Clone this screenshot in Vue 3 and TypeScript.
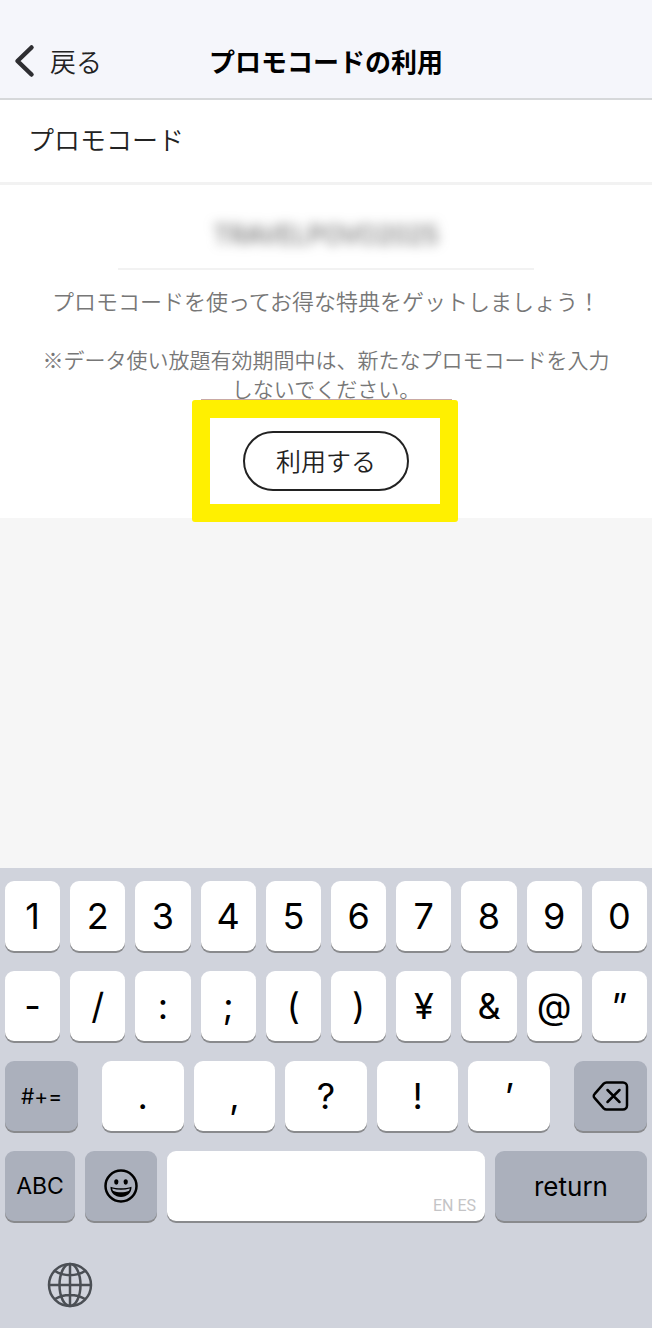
<script setup lang="ts">
import { ref } from 'vue'

const code = ref<string>('TRAVELPOVO2025')
const topRows: string[][] = [
  ['1', '2', '3', '4', '5', '6', '7', '8', '9', '0'],
  ['-', '/', ':', ';', '(', ')', '¥', '&', '@', '”'],
]
const punctuation: string[] = ['.', ',', '?', '!', '’']

function press(key: string): void {
  code.value += key
}

function erase(): void {
  code.value = code.value.slice(0, -1)
}
</script>

<template>
  <div class="screen">
    <header class="bar">
      <button class="back" type="button">
        <svg class="chevron" viewBox="0 0 22 34" aria-hidden="true">
          <path d="M17.500 3.500 3.500 17l14 13.500" />
        </svg>
        <span>戻る</span>
      </button>
      <h1 class="title">プロモコードの利用</h1>
    </header>

    <main>
      <div class="heading">
        <label for="promo">プロモコード</label>
      </div>
      <form class="form" @submit.prevent>
        <div class="field">
          <input id="promo" v-model="code" class="code" type="text" autocomplete="off" spellcheck="false" />
        </div>
        <p class="help">プロモコードを使ってお得な特典をゲットしましょう！</p>
        <p class="note">※データ使い放題有効期間中は、新たなプロモコードを入力しないでください。</p>
        <div class="action">
          <button class="submit" type="submit">利用する</button>
          <span class="highlight" aria-hidden="true"></span>
        </div>
      </form>
    </main>

    <section class="keyboard" aria-label="キーボード">
      <div v-for="(row, i) in topRows" :key="i" class="row tens">
        <button v-for="key in row" :key="key" class="key" type="button" @click="press(key)">{{ key }}</button>
      </div>
      <div class="row third">
        <button class="key dark side symbols" type="button">#+=</button>
        <div class="middle">
          <button v-for="key in punctuation" :key="key" class="key" type="button" @click="press(key)">{{ key }}</button>
        </div>
        <button class="key dark side" type="button" aria-label="削除" @click="erase">
          <svg class="delete" viewBox="0 0 38 32" aria-hidden="true">
            <path d="M14.500 2.500H31a4 4 0 0 1 4 4v19a4 4 0 0 1-4 4H14.500a4 4 0 0 1-2.800-1.200L2.700 18.200a3 3 0 0 1 0-4.400l9-10.100a4 4 0 0 1 2.800-1.200Z" />
            <path d="m15.500 10 12 12m0-12-12 12" />
          </svg>
        </button>
      </div>
      <div class="row fourth">
        <button class="key dark letters" type="button">ABC</button>
        <button class="key dark emoji" type="button" aria-label="絵文字">
          <svg class="face" viewBox="0 0 34 34" aria-hidden="true">
            <circle cx="17" cy="17" r="15.500" fill="none" stroke="#000" stroke-width="2.500" />
            <ellipse cx="12.300" cy="13" rx="2.100" ry="2.700" />
            <ellipse cx="21.700" cy="13" rx="2.100" ry="2.700" />
            <path d="M6.500 17.800c3.200 1 6.800 1.500 10.500 1.500s7.300-.5 10.500-1.500c.2 6.200-4.500 10.200-10.500 10.200S6.300 24 6.500 17.800Z" />
            <path d="M8.200 19.500c2.800.8 5.800 1.200 8.800 1.200s6-.4 8.800-1.200c-.1.900-.4 1.600-.8 2.200-2.500 1-5.200 1.500-8 1.500s-5.500-.5-8-1.500c-.4-.6-.7-1.300-.8-2.200Z" fill="#abb0bc" />
          </svg>
        </button>
        <button class="key space" type="button" @click="press(' ')">EN ES</button>
        <button class="key dark return" type="button">return</button>
      </div>
      <button class="globe" type="button" aria-label="次のキーボード">
        <svg viewBox="0 0 46 46" aria-hidden="true">
          <circle cx="23" cy="23" r="21" />
          <ellipse cx="23" cy="23" rx="10.500" ry="21" />
          <path d="M23 2v42M2 23h42M8 9c8.500 5.500 21.500 5.500 30 0M8 37c8.500-5.500 21.500-5.500 30 0" />
        </svg>
      </button>
    </section>
  </div>
</template>

<style>
body {
  margin: 0;
  background: #f6f6f6;
}
</style>

<style scoped>
.screen {
  display: flex;
  flex-direction: column;
  min-height: 100vh;
  background: #f6f6f6;
  color: #222;
  font-family: "Noto Sans CJK JP", sans-serif;
  font-weight: 350;
}

button,
input {
  margin: 0;
  padding: 0;
  border: 0;
  background: none;
  color: inherit;
  font: inherit;
}

.bar {
  display: grid;
  grid-template-columns: 1fr auto 1fr;
  align-items: center;
  height: 74px;
  padding: 24px 14px 0;
  border-bottom: 2px solid #d6d8da;
  background: #f5f6fb;
}

.back {
  display: flex;
  align-items: center;
  gap: 14px;
  justify-self: start;
  font-size: 26px;
  line-height: 38px;
}

.chevron {
  width: 22px;
  height: 34px;
  fill: none;
  stroke: #2e2e32;
  stroke-width: 4.5px;
  stroke-linecap: round;
  stroke-linejoin: round;
}

.title {
  margin: 0;
  color: #000;
  font-size: 26px;
  font-weight: 700;
  line-height: 38px;
}

.heading {
  padding: 20px 28px 24px;
  border-bottom: 3px solid #f2f2f2;
  background: #fff;
  font-size: 26px;
  line-height: 38px;
}

.form {
  display: flex;
  flex-direction: column;
  align-items: center;
  padding: 17px 36px 27px;
  background: #fff;
  color: #777;
  text-align: center;
}

.field {
  width: 416px;
  max-width: 100%;
  border-bottom: 2px solid #f2f2f2;
}

.code {
  display: block;
  box-sizing: border-box;
  width: 100%;
  height: 66px;
  outline: none;
  color: #555;
  font-family: Inter, sans-serif;
  font-size: 25px;
  font-weight: 400;
  text-align: center;
  filter: blur(6px);
}

.help,
.note {
  margin: 0;
  line-height: 29px;
}

.help {
  margin: 16px 0 30px;
  font-size: 22px;
  white-space: nowrap;
}

.note {
  font-size: 21px;
}

.action {
  position: relative;
  margin-top: 28px;
}

.submit {
  display: block;
  box-sizing: border-box;
  width: 166px;
  height: 60px;
  padding-bottom: 2px;
  border: 2px solid #222;
  border-radius: 30px;
  background: #fff;
  color: #222;
  font-size: 25px;
}

.highlight {
  position: absolute;
  inset: -31px -49px -31px -51px;
  border: 18px solid #fff000;
  border-radius: 3px;
  pointer-events: none;
}

.highlight::before {
  content: "";
  position: absolute;
  top: -19px;
  right: -12px;
  left: -9px;
  height: 1px;
  background: #c9a9a4;
}

.keyboard {
  display: flex;
  flex-direction: column;
  gap: 20px;
  box-sizing: border-box;
  min-height: 460px;
  margin-top: auto;
  padding: 13px 5px 20px;
  background: #d0d3dc;
  color: #000;
  font-family: Inter, sans-serif;
  font-weight: 400;
}

.row {
  display: flex;
  gap: 10px;
}

.tens {
  display: grid;
  grid-template-columns: repeat(10, 1fr);
}

.third {
  gap: 24px;
}

.middle {
  display: flex;
  flex: 1;
  gap: 10px;
}

.middle .key {
  flex: 1;
}

.key {
  display: flex;
  align-items: center;
  justify-content: center;
  min-width: 0;
  height: 70px;
  border-radius: 9px;
  background: #fff;
  box-shadow: 0 2px 0 #898a8d;
  font-size: 36px;
}

.dark {
  background: #abb0bc;
}

.side {
  width: 73px;
}

.symbols {
  font-size: 21px;
}

.letters {
  width: 70px;
  font-size: 23px;
}

.emoji {
  width: 72px;
}

.space {
  flex: 1;
  align-items: flex-end;
  justify-content: flex-end;
  box-sizing: border-box;
  padding: 0 9px 6px;
  color: #c4c4c6;
  font-family: Roboto, sans-serif;
  font-size: 16px;
}

.return {
  width: 152px;
  font-size: 26px;
}

.delete {
  width: 38px;
  height: 32px;
  fill: none;
  stroke: #000;
  stroke-width: 2.5px;
  stroke-linecap: round;
  stroke-linejoin: round;
}

.face {
  width: 34px;
  height: 34px;
}

.globe {
  align-self: flex-start;
  width: 46px;
  height: 46px;
  margin: 21px 0 0 42px;
}

.globe svg {
  display: block;
  fill: none;
  stroke: #4b4f55;
  stroke-width: 2.5px;
}
</style>
